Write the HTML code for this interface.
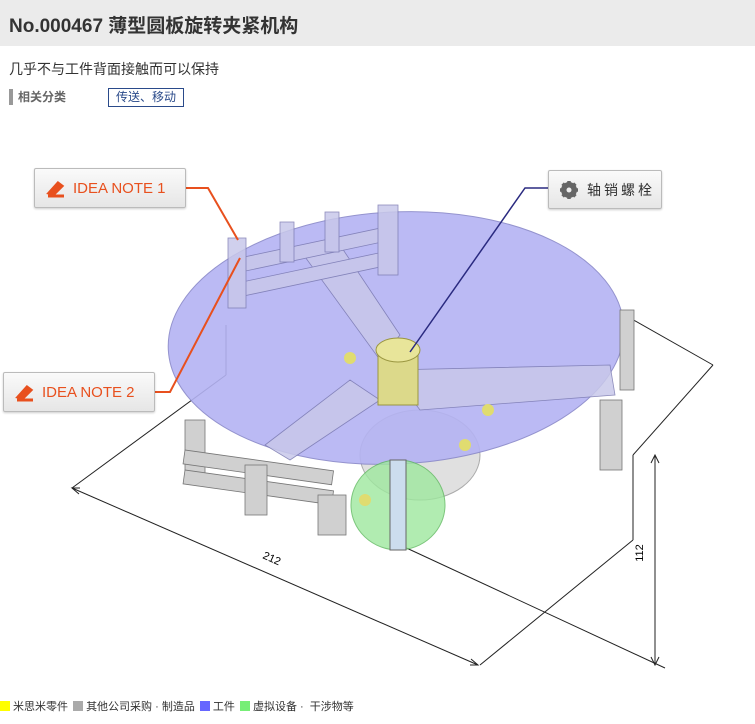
<!DOCTYPE html>
<html><head><meta charset="utf-8"><style>
body{margin:0;width:755px;height:724px;background:#fff;font-family:"Liberation Sans","Noto Sans CJK SC",sans-serif;position:relative;overflow:hidden}
.hdr{position:absolute;left:0;top:0;width:755px;height:46px;background:#ebebeb}
.hdr h1{margin:0;position:absolute;left:9px;top:11px;font-size:19px;font-weight:bold;color:#333}
.sub{position:absolute;left:9px;top:59px;font-size:14px;color:#333}
.cat{position:absolute;left:9px;top:89px;height:16px;border-left:4px solid #999;padding-left:5px;font-size:12px;font-weight:bold;color:#666;line-height:16px}
.tag{position:absolute;left:108px;top:88px;width:74px;height:17px;border:1px solid #2a4a8a;font-size:12px;color:#2a4a8a;text-align:center;line-height:17px}
.btn{position:absolute;background:linear-gradient(#fafafa,#e6e6e6);border:1px solid #bbb;border-radius:2px;box-shadow:0 1px 2px rgba(0,0,0,.2);font-size:15px;color:#e8501e;line-height:40px}
.leg{position:absolute;top:698px;left:0;font-size:11px;color:#333;white-space:nowrap}
.leg i{display:inline-block;width:10px;height:10px;vertical-align:-1px;margin:0 3px 0 2px}
</style></head><body>
<div class="hdr"><h1>No.000467 薄型圆板旋转夹紧机构</h1></div>
<div class="sub">几乎不与工件背面接触而可以保持</div>
<div class="cat">相关分类</div>
<div class="tag">传送、移动</div>
<svg width="755" height="724" style="position:absolute;left:0;top:0">
<g fill="none" stroke="#222" stroke-width="1">
<line x1="72" y1="488" x2="478" y2="665"/>
<line x1="480" y1="665" x2="633" y2="540"/>
<line x1="633" y1="540" x2="633" y2="455"/>
<line x1="633" y1="455" x2="713" y2="365"/>
<line x1="713" y1="365" x2="630" y2="318"/>
<line x1="655" y1="455" x2="655" y2="665"/>
<line x1="400" y1="545" x2="665" y2="668"/>
<line x1="226" y1="325" x2="226" y2="375"/>
<line x1="226" y1="375" x2="72" y2="488"/>
<polyline points="80,488 72,488 79,494"/>
<polyline points="470,665 478,665 471,659"/>
<polyline points="651,463 655,455 659,463"/>
<polyline points="651,657 655,665 659,657"/>
</g>
<text x="262" y="558" font-size="11" transform="rotate(24 262 558)" font-family="Liberation Sans">212</text>
<text x="643" y="553" font-size="11" transform="rotate(-90 643 553)" text-anchor="middle" font-family="Liberation Sans">112</text>
<ellipse cx="420" cy="455" rx="60" ry="45" fill="#e0e0e0" stroke="#aaa"/>
<ellipse cx="396" cy="338" rx="228" ry="126" transform="rotate(-3 396 338)" fill="#b4b3f3" stroke="#8988c9" opacity=".9"/>
<g fill="#c8c8ea" stroke="#7a79b0" stroke-width=".8" opacity=".85">
<polygon points="300,250 340,245 400,335 380,360"/>
<polygon points="390,370 610,365 615,395 420,410"/>
<polygon points="350,380 380,400 290,460 265,445"/>
<rect x="230" y="260" width="160" height="14" transform="rotate(-12 230 260)"/>
<rect x="228" y="285" width="160" height="14" transform="rotate(-12 228 285)"/>
<rect x="228" y="238" width="18" height="70"/>
<rect x="378" y="205" width="20" height="70"/>
<rect x="280" y="222" width="14" height="40"/>
<rect x="325" y="212" width="14" height="40"/>
</g>
<g fill="#d0d0d0" stroke="#777" stroke-width=".8">
<rect x="185" y="420" width="20" height="60"/>
<rect x="185" y="450" width="150" height="14" transform="rotate(8 185 450)"/>
<rect x="185" y="470" width="150" height="14" transform="rotate(8 185 470)"/>
<rect x="318" y="495" width="28" height="40"/>
<rect x="245" y="465" width="22" height="50"/>
<rect x="600" y="400" width="22" height="70"/>
<rect x="620" y="310" width="14" height="80"/>
</g>
<ellipse cx="398" cy="505" rx="47" ry="45" fill="#9ee89e" stroke="#5cb85c" opacity=".8"/>
<rect x="390" y="460" width="16" height="90" fill="#cde" stroke="#666"/>
<rect x="378" y="345" width="40" height="60" fill="#dcd98a" stroke="#9a9640"/>
<ellipse cx="398" cy="350" rx="22" ry="12" fill="#e8e59a" stroke="#9a9640"/>
<circle cx="350" cy="358" r="6" fill="#e0dc70"/><circle cx="488" cy="410" r="6" fill="#e0dc70"/><circle cx="465" cy="445" r="6" fill="#e0dc70"/><circle cx="365" cy="500" r="6" fill="#e0dc70"/>
<polyline points="185,188 208,188 238,240" fill="none" stroke="#e8501e" stroke-width="2"/>
<polyline points="155,392 170,392 240,258" fill="none" stroke="#e8501e" stroke-width="2"/>
<polyline points="548,188 525,188 410,352" fill="none" stroke="#2a2a80" stroke-width="1.5"/>
</svg>
<div class="btn" style="left:34px;top:168px;width:150px;height:38px">
<svg width="20" height="20" style="position:absolute;left:11px;top:9px"><path d="M3 15 L12 5 L16 8 L8 16 Z M2 18 H18" stroke="#e8501e" stroke-width="3" fill="#e8501e"/></svg>
<span style="position:absolute;left:38px">IDEA NOTE 1</span></div>
<div class="btn" style="left:3px;top:372px;width:150px;height:38px">
<svg width="20" height="20" style="position:absolute;left:11px;top:9px"><path d="M3 15 L12 5 L16 8 L8 16 Z M2 18 H18" stroke="#e8501e" stroke-width="3" fill="#e8501e"/></svg>
<span style="position:absolute;left:38px">IDEA NOTE 2</span></div>
<div class="btn" style="left:548px;top:170px;width:112px;height:37px;color:#333;font-size:14px;line-height:38px">
<svg width="20" height="20" style="position:absolute;left:10px;top:9px" viewBox="0 0 20 20"><circle cx="10" cy="10" r="6" fill="none" stroke="#666" stroke-width="4"/><g stroke="#666" stroke-width="3.5"><line x1="10" y1="1" x2="10" y2="19"/><line x1="1" y1="10" x2="19" y2="10"/><line x1="3.6" y1="3.6" x2="16.4" y2="16.4"/><line x1="16.4" y1="3.6" x2="3.6" y2="16.4"/></g><circle cx="10" cy="10" r="2.5" fill="#eee"/></svg>
<span style="position:absolute;left:38px;letter-spacing:3px">轴销螺栓</span></div>
<div class="leg"><i style="background:#ff0;margin-left:0"></i>米思米零件 <i style="background:#aaa"></i>其他公司采购 · 制造品 <i style="background:#66f"></i>工件 <i style="background:#7e7"></i>虚拟设备 ·&nbsp; 干涉物等</div>
</body></html>
